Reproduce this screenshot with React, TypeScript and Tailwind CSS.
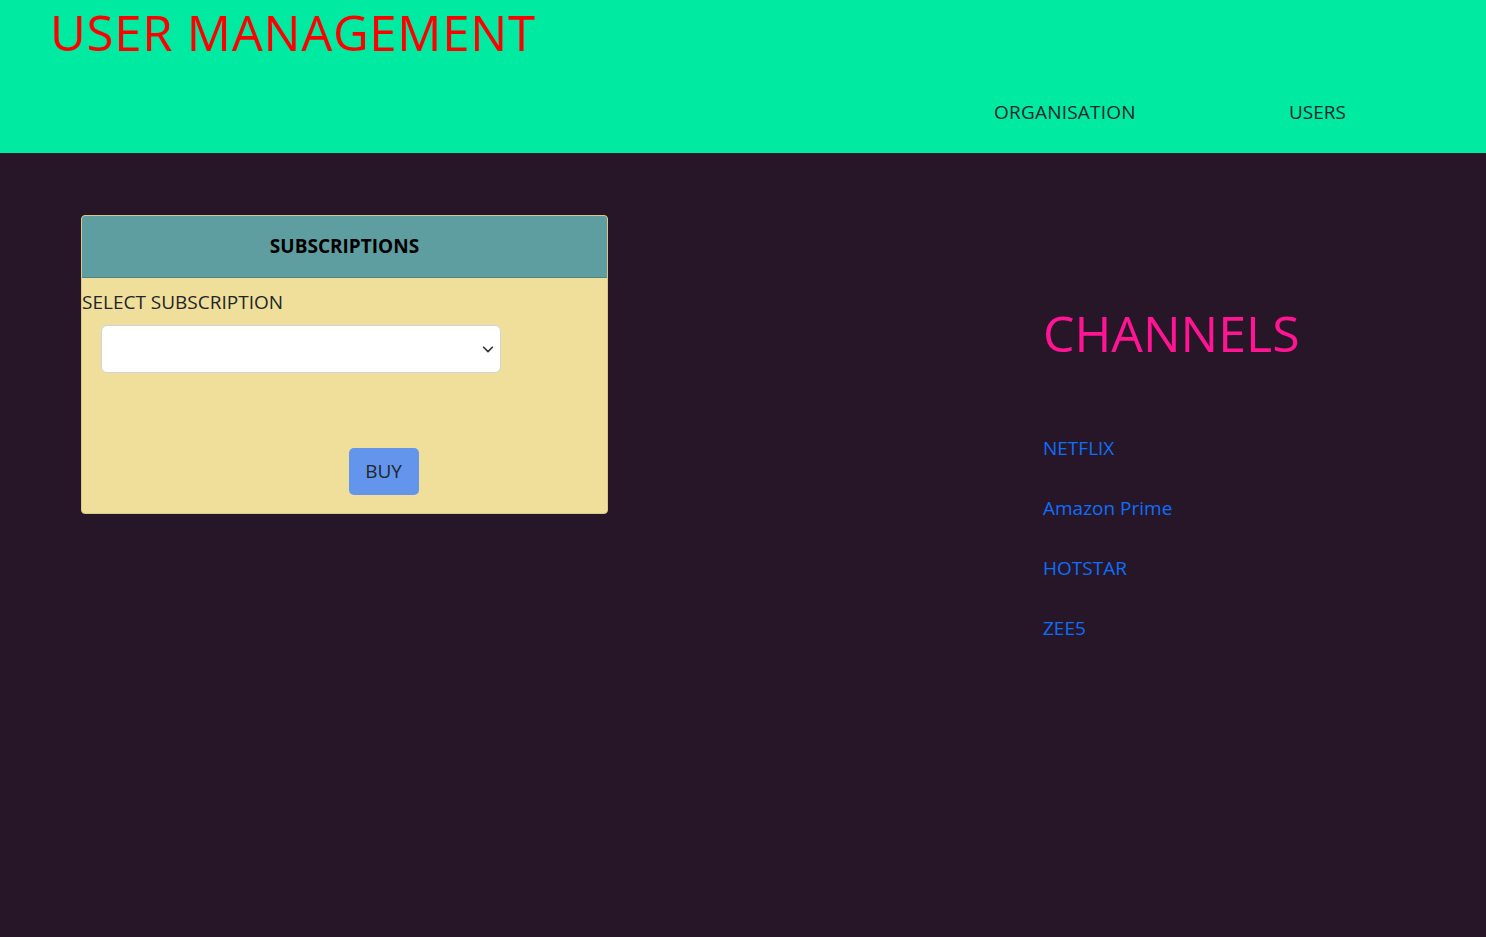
export default function App() {
  const channels = ["NETFLIX", "Amazon Prime", "HOTSTAR", "ZEE5"];

  return (
    <div className="min-h-[937px] bg-[#271628] font-['Open_Sans',sans-serif]">
      {/* header */}
      <header className="h-[153px] bg-[#00eaa2] flex flex-col">
        <h1 className="pl-[50px] pt-[2px] text-[49px] leading-[60px] font-medium text-[#ff0000] tracking-[0.8px]">
          USER MANAGEMENT
        </h1>
        <nav className="flex mt-[36px] text-[19px] text-[#212529]">
          <a className="ml-[994px] w-[295px] tracking-[0.2px]">ORGANISATION</a>
          <a>USERS</a>
        </nav>
      </header>

      <div className="flex">
        {/* subscription card */}
        <div className="ml-[81px] mt-[62px] w-[527px] h-[299px] rounded-[4px] border border-[#d8c98a] bg-[#f0df9b] overflow-hidden flex flex-col">
          <div className="h-[62px] bg-[#5f9ea0] border-b border-[#4d8587] flex items-center justify-center">
            <span className="text-[19px] font-bold text-black">SUBSCRIPTIONS</span>
          </div>
          <label className="mt-[10px] text-[19px] leading-[28px] text-[#212529]">SELECT SUBSCRIPTION</label>
          <div className="ml-[19px] mt-[9px] w-[400px] h-[48px] bg-white border border-[#ced4da] rounded-[6px] flex items-center justify-end pr-[5px]">
            <svg width="14" height="14" viewBox="0 0 16 16" fill="none" stroke="#343a40" strokeWidth="2" strokeLinecap="round" strokeLinejoin="round">
              <path d="M3 6l5 5 5-5" />
            </svg>
          </div>
          <div className="flex justify-center mt-[75px] pl-[78px]">
            <button className="w-[70px] h-[47px] bg-[#6495ed] rounded-[5px] text-[19px] text-[#212529]">BUY</button>
          </div>
        </div>

        {/* channels */}
        <div className="ml-[435px] mt-[148px] flex flex-col">
          <h2 className="text-[50px] leading-[64px] font-medium text-[#ff1493]">CHANNELS</h2>
          <ul className="mt-[69px] flex flex-col gap-[32px] text-[19px] leading-[28px] text-[#0d6efd]">
            {channels.map((c) => (
              <li key={c}>
                <a>{c}</a>
              </li>
            ))}
          </ul>
        </div>
      </div>
    </div>
  );
}
